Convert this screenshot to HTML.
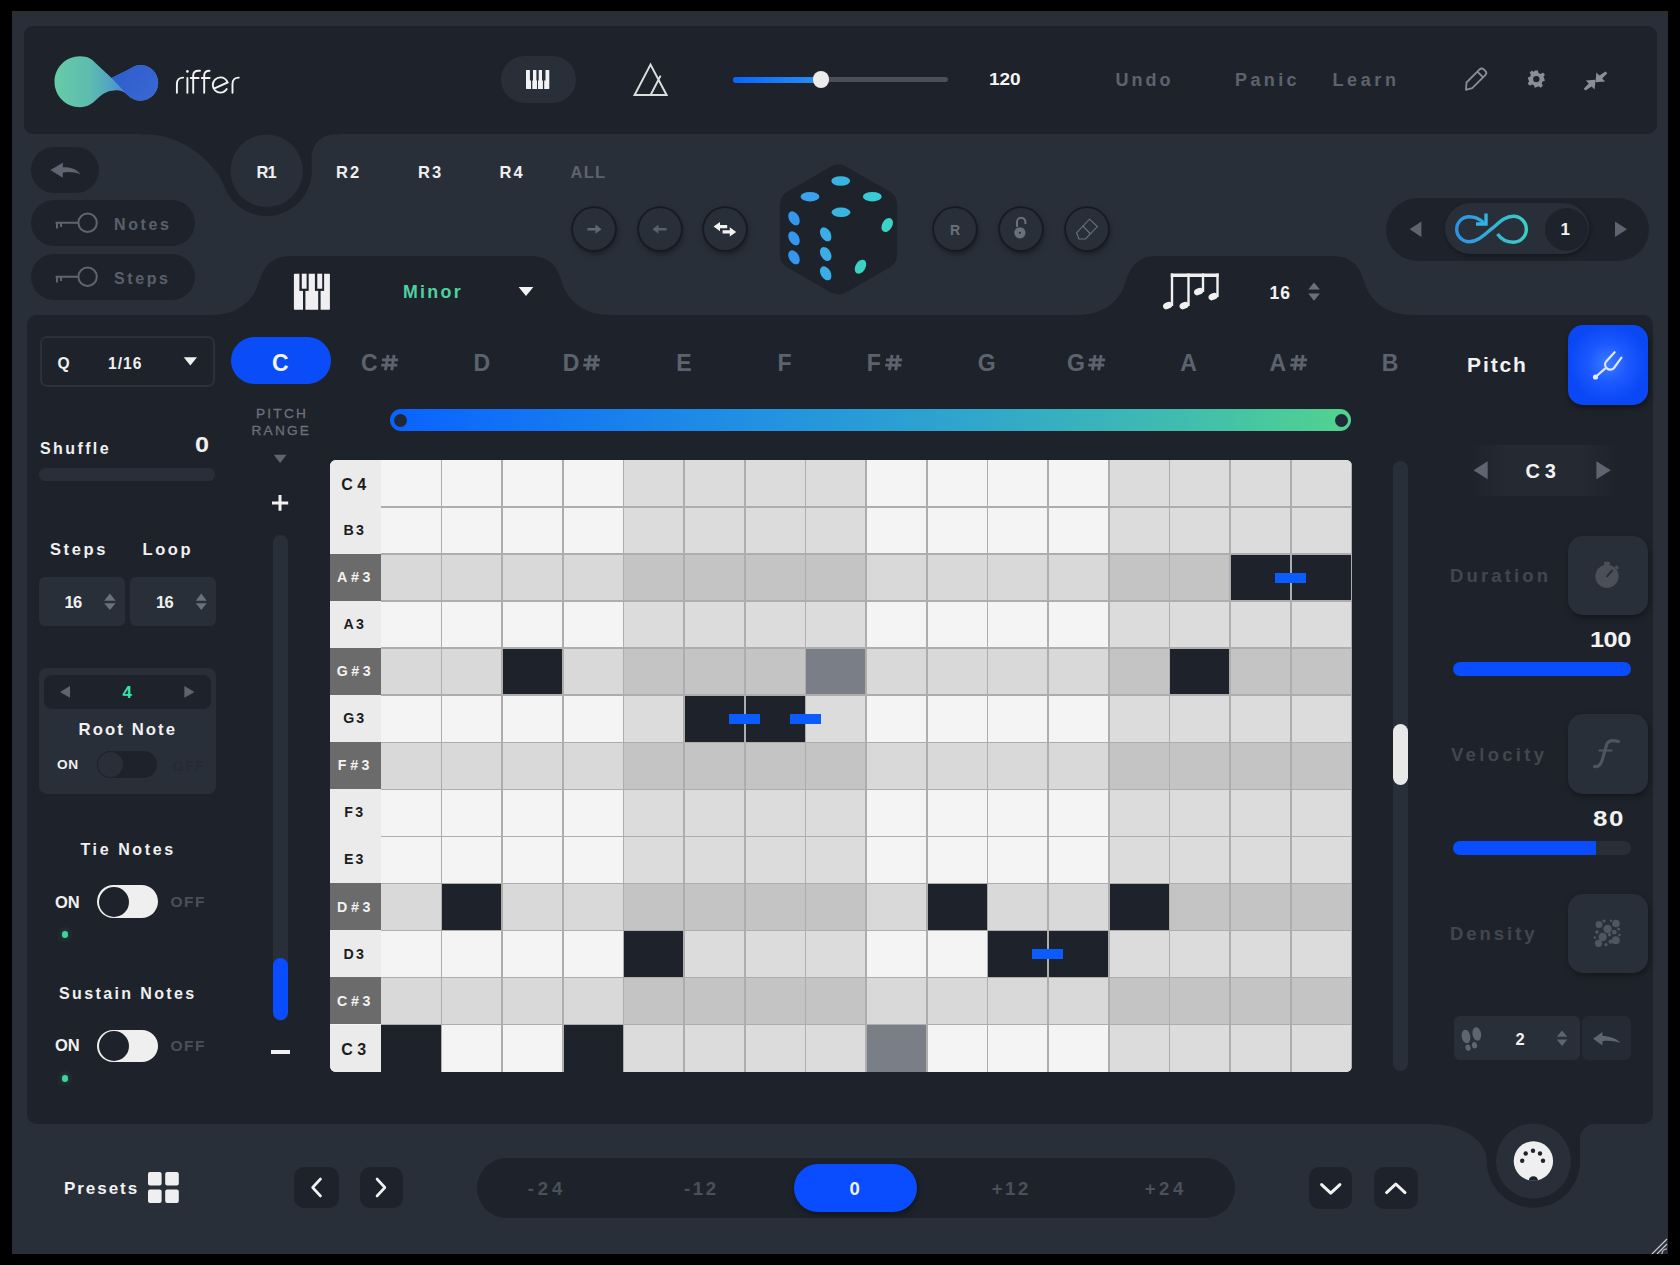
<!DOCTYPE html>
<html><head><meta charset="utf-8">
<style>
html,body{margin:0;padding:0;background:#000;width:1680px;height:1265px;overflow:hidden;font-family:"Liberation Sans",sans-serif;}
.a{position:absolute;}
.t{position:absolute;white-space:nowrap;font-weight:bold;line-height:1;}
.dk{background:#1e232b;}
.lt{background:#282f39;}
.cb{position:absolute;width:42px;height:42px;border-radius:50%;background:#282f39;box-shadow:0 0 0 1.8px #171a20,1px 3px 6px rgba(0,0,0,0.5);}
</style></head><body>
<svg class="a" style="left:0;top:0" width="1680" height="1265">
<rect x="12" y="11" width="1656" height="1243" fill="#282f39"/>
<rect x="12" y="11" width="1656" height="3" fill="#2c2d31"/>
<!-- header -->
<rect x="24" y="26" width="1633" height="108" rx="9" fill="#1e232b"/>
<path d="M140,130 V134.6 H148 C186,134.6 217.5,167.4 224.3,186.2 A45,45 0 0 0 311.6,170.8 V156.6 A22,22 0 0 1 333.6,134.6 H340 V120 H140 Z" fill="#1e232b"/>
<circle cx="266.6" cy="170.8" r="45" fill="#1e232b"/>
<circle cx="266.6" cy="170.8" r="36.2" fill="#282f39"/>
<!-- main panel -->
<rect x="27" y="315" width="1626" height="809" rx="10" fill="#1e232b"/>
<path d="M200,330 V315 H210 C238,315 253,300 258,285 C264,266 270,256 293,256 H528 C551,256 557,266 563,285 C568,300 583,315 611,315 V330 Z" fill="#1e232b"/>
<path d="M1066,330 V315 H1076.5 C1104.5,315 1119.5,300 1124.5,285 C1130.5,266 1136.5,256 1159.5,256 H1330.4 C1353.4,256 1359.4,266 1365.4,285 C1370.4,300 1385.4,315 1413.4,315 V330 Z" fill="#1e232b"/>
<!-- midi ring -->
<path d="M1420,1120 V1124 H1431 A56,37 0 0 1 1486.9,1161 A46.5,46.5 0 0 0 1579.9,1161 V1139 A15,15 0 0 1 1594.9,1124 H1610 V1110 H1420 Z" fill="#1e232b"/>
<circle cx="1533.4" cy="1161" r="46.5" fill="#1e232b"/>
<circle cx="1533.4" cy="1161" r="37.5" fill="#282f39"/>
</svg>
<!--HEADER-->
<svg class="a" style="left:0;top:0" width="260" height="130">
<defs>
<linearGradient id="lg" x1="54" y1="0" x2="126" y2="0" gradientUnits="userSpaceOnUse">
<stop offset="0" stop-color="#66cca6"/><stop offset="0.5" stop-color="#5dbcaf"/><stop offset="0.78" stop-color="#52a3c4"/><stop offset="1" stop-color="#4a86d4"/></linearGradient>
<linearGradient id="lg2" x1="112" y1="65" x2="158" y2="100" gradientUnits="userSpaceOnUse">
<stop offset="0" stop-color="#2d5cce"/><stop offset="1" stop-color="#3a68d2"/></linearGradient>
</defs>
<path d="M80,56.2 C88,56.2 92,59 96,63.5 L111.6,78.1 L130,68.8 C133.5,66.3 137,65 140.4,65 C150.2,65 158.2,73 158.2,82.8 C158.2,92.6 150.2,100.7 140.4,100.7 C135,100.7 131,98.5 127,94.5 C122,90 118,90.2 114.4,90.4 C108,90.6 103,93 97,99 C92,104 87,107.2 80,107.2 C65.9,107.2 54.5,95.8 54.5,81.7 C54.5,67.6 65.9,56.2 80,56.2 Z" fill="url(#lg)"/>
<path d="M111.6,78.1 L130,68.8 C133.5,66.3 137,65 140.4,65 C150.2,65 158.2,73 158.2,82.8 C158.2,92.6 150.2,100.7 140.4,100.7 C135,100.7 131,98.5 127,94.5 L125.6,93 Z" fill="url(#lg2)"/>
<g fill="none" stroke="#f4f4f4" stroke-width="1.9" stroke-linecap="round">
<path d="M176.9,92.8 V84 C176.9,80 179.5,77.6 183.2,77.6"/>
<path d="M187.4,78 V92.8"/>
<path d="M193.2,92.8 V75.5 C193.2,72.5 195.4,70.8 198.6,70.8 H200"/>
<path d="M190.8,78 H198.6"/>
<path d="M204.2,92.8 V75.5 C204.2,72.5 206.4,70.8 209.6,70.8"/>
<path d="M201.8,78 H209.6"/>
<path d="M214,88.6 L227.6,82.4 C226.3,79.3 223.4,77.4 220.4,77.4 C216.2,77.4 212.8,80.8 212.8,85 C212.8,89.2 216.2,92.6 220.4,92.6 C223.2,92.6 225.4,91.2 226.7,89"/>
<path d="M232.5,92.8 V84 C232.5,80 235.1,77.6 238.8,77.6"/>
</g>
<circle cx="187.4" cy="71.4" r="1.3" fill="#f4f4f4"/>
</svg>
<div class="a lt" style="left:501px;top:56px;width:75px;height:47px;border-radius:24px;"></div>
<svg class="a" style="left:526px;top:70px" width="24" height="19" viewBox="0 0 24 19"><g fill="#f2f2f4">
<path d="M0,0.6 Q0,0 0.6,0 H3.9 V10.6 H5 V18.9 H0.6 Q0,18.9 0,18.3 Z"/>
<path d="M7,0 H10.4 V10.6 H11 V18.9 H6.3 V10.6 H7 Z"/>
<path d="M12.7,0 H16 V10.6 H16.9 V18.9 H12 V10.6 H12.7 Z"/>
<path d="M19.5,0 H22.7 Q23.3,0 23.3,0.6 V18.3 Q23.3,18.9 22.7,18.9 H18.2 V10.6 H19.5 Z"/>
</g></svg>
<svg class="a" style="left:630px;top:60px" width="42" height="40">
<path d="M20.5,4.6 L4.6,35 H36.6 Z M20.6,35 L30.6,15.6" fill="none" stroke="#dcdcdc" stroke-width="2" stroke-linejoin="miter"/>
</svg>
<div class="a" style="left:733px;top:77px;width:215px;height:5px;border-radius:3px;background:#4a4f58;"></div>
<div class="a" style="left:733px;top:76.5px;width:90px;height:6px;border-radius:3px;background:linear-gradient(90deg,#0a66ff,#2a8ff0);"></div>
<div class="a" style="left:812.6px;top:70.9px;width:16.8px;height:16.8px;border-radius:50%;background:#ebebeb;"></div>
<div class="t" style="left:988.6px;top:71px;font-size:17px;color:#f5f5f5;letter-spacing:-0.1px;transform:scaleX(1.12);transform-origin:0 0;">120</div>
<div class="t" style="left:1115.5px;top:71px;font-size:18px;color:#5d636e;letter-spacing:3px;">Undo</div>
<div class="t" style="left:1235px;top:71px;font-size:18px;color:#5d636e;letter-spacing:3.4px;">Panic</div>
<div class="t" style="left:1332.5px;top:71px;font-size:18px;color:#5d636e;letter-spacing:3.6px;">Learn</div>
<svg class="a" style="left:1460px;top:62px" width="160" height="34">
<g fill="none" stroke="#8a8f97" stroke-width="1.8" stroke-linejoin="round">
<path d="M6.5,20.5 L19.6,7.4 C20.8,6.2 22.6,6.2 23.8,7.4 L25.3,8.9 C26.5,10.1 26.5,11.9 25.3,13.1 L12.2,26.2 L6,27.8 Z M17.4,9.6 L23.1,15.3"/>
</g>
<g transform="translate(76.3,17.1)" fill="#8a8f97">
<path d="M-1.6,-8.6 H1.6 L2.2,-6.2 L4.5,-5.2 L6.6,-6.6 L8.6,-4.4 L7.2,-2.3 L8.1,0 L8.6,1.6 L6.2,2.4 L5.4,4.4 L6.6,6.6 L4.4,8.6 L2.3,7.2 L0,8.1 L-1.6,8.6 L-2.4,6.2 L-4.4,5.4 L-6.6,6.6 L-8.6,4.4 L-7.2,2.3 L-8.1,0 L-8.6,-1.6 L-6.2,-2.4 L-5.4,-4.4 L-6.6,-6.6 L-4.4,-8.6 L-2.3,-7.2 Z"/>
<circle r="3.2" fill="#1e232b"/>
</g>
<g fill="#8a8f97">
<path d="M145.5,9.5 L147.3,11.3 L142.2,16.4 L145.2,19.4 L135.5,20.3 L136.4,10.6 L139.4,13.6 Z"/>
<path d="M125.5,28.5 L123.7,26.7 L128.8,21.6 L125.8,18.6 L135.5,17.7 L134.6,27.4 L131.6,24.4 Z"/>
</g>
</svg>

<!--TOP-->
<div class="a dk" style="left:31px;top:147px;width:68px;height:46px;border-radius:23px;"></div>
<svg class="a" style="left:31px;top:147px" width="68" height="46">
<path d="M19.4,23 L31.8,15.8 V20.3 C40,20 46,22.5 49.4,27.5 C44,25 38,24.5 31.8,25.6 V30.8 Z" fill="#5f6570"/>
</svg>
<div class="a dk" style="left:31px;top:200px;width:164px;height:46px;border-radius:23px;"></div>
<div class="a dk" style="left:31px;top:253.5px;width:164px;height:46px;border-radius:23px;"></div>
<svg class="a" style="left:50px;top:205px" width="60" height="90">
<g fill="none" stroke="#5f6570" stroke-width="2">
<circle cx="37.6" cy="17.8" r="9.2"/><path d="M5.6,17.8 H28.4 M7,17.8 V23.6 M11,17.8 V22"/>
<circle cx="37.6" cy="71.8" r="9.2"/><path d="M5.6,71.8 H28.4 M7,71.8 V77.6 M11,71.8 V76"/>
</g></svg>
<div class="t" style="left:114px;top:217px;font-size:16px;color:#5a606b;letter-spacing:2.6px;">Notes</div>
<div class="t" style="left:114px;top:270.5px;font-size:16px;color:#5a606b;letter-spacing:2.6px;">Steps</div>
<div class="t" style="left:256.5px;top:163.5px;font-size:16.5px;color:#f0f0f0;letter-spacing:-0.8px;">R1</div>
<div class="t" style="left:336px;top:163.5px;font-size:16.5px;color:#f0f0f0;letter-spacing:2px;">R2</div>
<div class="t" style="left:418px;top:163.5px;font-size:16.5px;color:#f0f0f0;letter-spacing:2px;">R3</div>
<div class="t" style="left:499.5px;top:163.5px;font-size:16.5px;color:#f0f0f0;letter-spacing:2px;">R4</div>
<div class="t" style="left:570.5px;top:163.5px;font-size:16.5px;color:#5d636e;letter-spacing:1.3px;">ALL</div>
<div class="cb" style="left:573px;top:208px;"></div>
<div class="cb" style="left:639px;top:208px;"></div>
<div class="cb" style="left:704px;top:208px;"></div>
<div class="cb" style="left:934px;top:208px;"></div>
<div class="cb" style="left:1000px;top:208px;"></div>
<div class="cb" style="left:1066px;top:208px;"></div>
<svg class="a" style="left:560px;top:150px" width="560" height="160">
<g fill="#6b717a">
<path d="M27.5,78 H35.5 V74.6 L41.5,79.2 L35.5,83.8 V80.4 H27.5 Z" fill="#62686f"/>
<path d="M106.5,78 H98.5 V74.6 L92.5,79.2 L98.5,83.8 V80.4 H106.5 Z" fill="#5a6068"/>
<text x="395" y="85.3" font-family="Liberation Sans" font-weight="bold" font-size="14" text-anchor="middle">R</text>
<circle cx="459.9" cy="82.8" r="5.6"/>
<path d="M457,77 V72 A4.2,4.2 0 0 1 465.4,72 V74" fill="none" stroke="#6b717a" stroke-width="2"/>
</g>
<circle cx="459.9" cy="82.8" r="1.1" fill="#282f39"/>
<g fill="#f2f2f2">
<path d="M153.6,76.6 L160,72 V75 H167.2 V78.2 H160 V81.2 Z"/>
<path d="M176.2,81.9 L169.8,77.3 V80.3 H162.6 V83.5 H169.8 V86.5 Z"/>
</g>
<g fill="none" stroke="#6b717a" stroke-width="1.1">
<path d="M516.5,82.8 L529.5,69.2 L537.4,76.6 L525.5,89 L519,89 Z M522.5,75.5 L530,83.5"/>
</g>
<path d="M270.99,16.51 Q278.50,12.20 286.01,16.51 L329.57,41.54 Q337.07,45.85 337.07,54.51 L337.07,104.49 Q337.07,113.15 329.57,117.46 L286.01,142.49 Q278.50,146.80 270.99,142.49 L227.43,117.46 Q219.93,113.15 219.93,104.49 L219.93,54.51 Q219.93,45.85 227.43,41.54 Z" fill="#1e232b"/>
<g>
<ellipse cx="280.7" cy="31" rx="9.4" ry="4.8" fill="#38b4e2"/>
<ellipse cx="250" cy="46.7" rx="9.4" ry="4.8" fill="#3aa2ea"/>
<ellipse cx="312.3" cy="46.7" rx="9.4" ry="4.8" fill="#3acad6"/>
<ellipse cx="281" cy="62.3" rx="9.4" ry="4.8" fill="#38b6e0"/>
<g fill="#3596ee">
<ellipse cx="234" cy="68.3" rx="5" ry="7.6" transform="rotate(-30 234 68.3)"/>
<ellipse cx="234" cy="88.3" rx="5" ry="7.6" transform="rotate(-30 234 88.3)"/>
<ellipse cx="234" cy="107.3" rx="5" ry="7.6" transform="rotate(-30 234 107.3)"/>
</g>
<g fill="#38ade6">
<ellipse cx="265.7" cy="84.3" rx="5" ry="7.6" transform="rotate(-30 265.7 84.3)"/>
<ellipse cx="265.7" cy="104" rx="5" ry="7.6" transform="rotate(-30 265.7 104)"/>
<ellipse cx="265.7" cy="123.3" rx="5" ry="7.6" transform="rotate(-30 265.7 123.3)"/>
</g>
<g fill="#3dd2c6">
<ellipse cx="327.2" cy="75" rx="5" ry="7.6" transform="rotate(30 327.2 75)"/>
<ellipse cx="300.5" cy="116.7" rx="5" ry="7.6" transform="rotate(30 300.5 116.7)"/>
</g>
</g>
</svg>
<div class="a dk" style="left:1386px;top:198px;width:263px;height:63px;border-radius:32px;"></div>
<div class="a lt" style="left:1445px;top:203px;width:144px;height:51px;border-radius:26px;box-shadow:1px 2px 4px rgba(0,0,0,0.35);"></div>
<div class="a dk" style="left:1544.5px;top:207.5px;width:43px;height:43px;border-radius:50%;"></div>
<div class="t" style="left:1560.5px;top:220.8px;font-size:17px;color:#f2f2f2;">1</div>
<svg class="a" style="left:1400px;top:200px" width="240" height="60">
<path d="M9.7,29.2 L21.4,21.4 V37 Z" fill="#5f6570"/>
<path d="M215,21.4 V37 L227,29.2 Z" fill="#5f6570"/>
<defs><linearGradient id="ig" x1="55" y1="0" x2="128" y2="0" gradientUnits="userSpaceOnUse"><stop offset="0" stop-color="#2d8fe6"/><stop offset="1" stop-color="#3ccfc8"/></linearGradient></defs>
<path d="M97.5,34 C101,39 106,42.2 113.3,42.2 C120.5,42.2 126.3,36.4 126.3,29.2 C126.3,22 120.5,16.2 113.3,16.2 C104,16.2 98,24 91.2,29.2 C84.5,34.5 78,41.7 69.2,41.7 C62.3,41.7 56.7,36.1 56.7,29.2 C56.7,22.3 62.3,16.7 69.2,16.7 C74,16.7 79,18.5 83.5,22.5" fill="none" stroke="url(#ig)" stroke-width="3.4" stroke-linecap="butt"/>
<path d="M86,13.6 V24 H76" fill="none" stroke="#37b0e4" stroke-width="3.4" stroke-linejoin="miter"/>
</svg>
<svg class="a" style="left:293px;top:273px" width="38" height="38">
<rect x="0.9" y="0.7" width="36" height="36" rx="0.8" fill="#f0f0f2"/>
<g fill="#1e232b"><rect x="10" y="15" width="2.4" height="22"/><rect x="25.2" y="15" width="2.4" height="22"/>
<rect x="6.4" y="0" width="9.3" height="17.9"/><rect x="21.9" y="0" width="9.2" height="17.9"/></g>
<g fill="#f0f0f2"><rect x="8.8" y="0.7" width="4.8" height="15"/><rect x="24.3" y="0.7" width="4.9" height="15"/></g>
</svg>
<div class="t" style="left:403px;top:284px;font-size:17.8px;color:#4fd0a0;letter-spacing:2.3px;">Minor</div>
<svg class="a" style="left:515px;top:283px" width="22" height="16"><path d="M3.6,4 H18.4 L11,13.1 Z" fill="#f2f2f2"/></svg>
<svg class="a" style="left:1160px;top:270px" width="62" height="44">
<g fill="#f0f0f0">
<rect x="10.8" y="3.5" width="47.9" height="3.5"/>
<rect x="10.8" y="3.5" width="2.4" height="32.5"/><rect x="27.3" y="3.5" width="2.4" height="32.5"/>
<rect x="41.8" y="3.5" width="2.4" height="18.5"/><rect x="56.3" y="3.5" width="2.4" height="23.5"/>
<ellipse cx="7.6" cy="35.6" rx="4.8" ry="3.3" transform="rotate(-24 7.6 35.6)"/>
<ellipse cx="24.1" cy="35.6" rx="4.8" ry="3.3" transform="rotate(-24 24.1 35.6)"/>
<ellipse cx="38.6" cy="21.6" rx="4.8" ry="3.3" transform="rotate(-24 38.6 21.6)"/>
<ellipse cx="53.1" cy="26.6" rx="4.8" ry="3.3" transform="rotate(-24 53.1 26.6)"/>
</g></svg>
<div class="t" style="left:1269.5px;top:284.5px;font-size:17.5px;color:#f2f2f2;letter-spacing:1px;">16</div>
<svg class="a" style="left:1305px;top:280px" width="18" height="24"><path d="M3.3,9.6 L9,2.5 L14.9,9.6 Z M3.3,13.6 H14.9 L9,20.7 Z" fill="#6b717a"/></svg>

<!--LEFT-->
<div class="a" style="left:39.5px;top:335.7px;width:171.8px;height:47.3px;border:2px solid #2b3039;border-radius:7px;"></div>
<div class="t" style="left:57.5px;top:356px;font-size:15.6px;color:#f0f0f0;">Q</div>
<div class="t" style="left:108px;top:356px;font-size:15.6px;color:#f0f0f0;letter-spacing:1px;">1/16</div>
<svg class="a" style="left:180px;top:354px" width="20" height="14"><path d="M3.7,3.2 H17 L10.35,11.4 Z" fill="#f0f0f0"/></svg>
<div class="t" style="left:40px;top:441px;font-size:16px;color:#f0f0f0;letter-spacing:2.4px;">Shuffle</div>
<div class="t" style="left:194.9px;top:433.5px;font-size:22.5px;color:#f0f0f0;transform:scaleX(1.12);transform-origin:0 0;">0</div>
<div class="a lt" style="left:39px;top:468px;width:176px;height:12.6px;border-radius:6.3px;"></div>
<div class="t" style="left:50px;top:541px;font-size:16.5px;color:#f0f0f0;letter-spacing:2.6px;">Steps</div>
<div class="t" style="left:142.5px;top:541px;font-size:16.5px;color:#f0f0f0;letter-spacing:2.6px;">Loop</div>
<div class="a lt" style="left:39px;top:577px;width:86px;height:49px;border-radius:6px;"></div>
<div class="a lt" style="left:130px;top:577px;width:85.6px;height:49px;border-radius:6px;"></div>
<div class="t" style="left:64.5px;top:593.8px;font-size:16.5px;color:#f0f0f0;letter-spacing:-0.6px;">16</div>
<div class="t" style="left:156px;top:593.8px;font-size:16.5px;color:#f0f0f0;letter-spacing:-0.6px;">16</div>
<svg class="a" style="left:100px;top:590px" width="112" height="24"><g fill="#6b717a"><path d="M4.2,10.7 L9.9,3.6 L15.6,10.7 Z M4.2,13.2 H15.6 L9.9,20 Z"/><path d="M95.8,10.7 L101.25,3.6 L106.7,10.7 Z M95.8,13.2 H106.7 L101.25,20 Z"/></g></svg>
<div class="a lt" style="left:39px;top:668px;width:176.6px;height:126px;border-radius:8px;"></div>
<div class="a dk" style="left:44px;top:674.6px;width:167px;height:34px;border-radius:8px;"></div>
<svg class="a" style="left:56px;top:682px" width="144" height="20"><g fill="#5f6570"><path d="M4,9.9 L14,4 V15.8 Z"/><path d="M128.4,4 V15.8 L138.5,9.9 Z"/></g></svg>
<div class="t" style="left:122.5px;top:683.5px;font-size:17px;color:#3de0a8;">4</div>
<div class="t" style="left:78.5px;top:722px;font-size:16.7px;color:#f0f0f0;letter-spacing:2.1px;">Root Note</div>
<div class="t" style="left:57px;top:757.8px;font-size:13.7px;color:#f0f0f0;letter-spacing:0.6px;">ON</div>
<div class="a dk" style="left:97px;top:750.6px;width:59.7px;height:27.4px;border-radius:14px;"></div>
<div class="a lt" style="left:98px;top:751.6px;width:25.4px;height:25.4px;border-radius:50%;box-shadow:0 0 0 1px #20242c;"></div>
<div class="t" style="left:172.5px;top:759px;font-size:14px;color:#262a32;letter-spacing:1.5px;">OFF</div>
<div class="t" style="left:80.5px;top:841.5px;font-size:16px;color:#f0f0f0;letter-spacing:2.6px;">Tie Notes</div>
<div class="t" style="left:55px;top:893.5px;font-size:16.5px;color:#f0f0f0;letter-spacing:0px;">ON</div>
<div class="a" style="left:97.2px;top:885.3px;width:60.8px;height:32.9px;border-radius:16.5px;background:#efefef;"></div>
<div class="a dk" style="left:98.5px;top:886.6px;width:30.3px;height:30.3px;border-radius:50%;"></div>
<div class="t" style="left:170.5px;top:893.8px;font-size:15.5px;color:#4a4f58;letter-spacing:1.5px;">OFF</div>
<div class="a" style="left:61.7px;top:931.1px;width:6.6px;height:6.6px;border-radius:50%;background:#40d49a;box-shadow:0 0 4px 2px rgba(40,140,100,0.25);"></div>
<div class="t" style="left:59px;top:986px;font-size:16px;color:#f0f0f0;letter-spacing:2.38px;">Sustain Notes</div>
<div class="t" style="left:55px;top:1037.3px;font-size:16.5px;color:#f0f0f0;letter-spacing:0px;">ON</div>
<div class="a" style="left:97.2px;top:1029.5px;width:60.8px;height:32.9px;border-radius:16.5px;background:#efefef;"></div>
<div class="a dk" style="left:98.5px;top:1030.8px;width:30.3px;height:30.3px;border-radius:50%;"></div>
<div class="t" style="left:170.5px;top:1037.5px;font-size:15.5px;color:#4a4f58;letter-spacing:1.5px;">OFF</div>
<div class="a" style="left:61.7px;top:1075.2px;width:6.6px;height:6.6px;border-radius:50%;background:#40d49a;box-shadow:0 0 4px 2px rgba(40,140,100,0.25);"></div>
<div class="t" style="left:256px;top:406.5px;font-size:13.7px;color:#6b717a;letter-spacing:2.2px;font-weight:normal;-webkit-text-stroke:0.3px #6b717a;">PITCH</div>
<div class="t" style="left:251.5px;top:423.5px;font-size:13.7px;color:#6b717a;letter-spacing:2.2px;font-weight:normal;-webkit-text-stroke:0.3px #6b717a;">RANGE</div>
<svg class="a" style="left:270px;top:450px" width="20" height="16"><path d="M3.7,4.8 H16.6 L10.15,13 Z" fill="#5f6570"/></svg>
<svg class="a" style="left:268px;top:491px" width="24" height="24"><path d="M12,4 V19.8 M4,11.9 H20.2" stroke="#f2f2f2" stroke-width="3"/></svg>
<div class="a lt" style="left:273px;top:535px;width:15px;height:486px;border-radius:7.5px;"></div>
<div class="a" style="left:273px;top:958px;width:15px;height:62px;border-radius:7.5px;background:#0a4cff;"></div>
<div class="a" style="left:270.6px;top:1050px;width:19px;height:3.5px;background:#f2f2f2;"></div>
<div class="a" style="left:231px;top:337px;width:100px;height:47px;border-radius:23.5px;background:#0a4cf8;"></div>
<!--NOTELABELS-->
<div class="t" style="left:271.9px;top:351.6px;font-size:23px;color:#f4f4f4;">C</div>
<div class="t" style="left:361.1px;top:351.6px;font-size:23px;color:#5d636e;">C</div>
<svg class="a" style="left:381.4px;top:353.8px" width="19" height="18"><path d="M7.1,1 L4.45,16.2 M13.1,1 L10.7,16.2 M1,5.8 H17.1 M0.2,11.1 H16.2" stroke="#5d636e" stroke-width="2.8" fill="none"/></svg>
<div class="t" style="left:473.4px;top:351.6px;font-size:23px;color:#5d636e;">D</div>
<div class="t" style="left:562.7px;top:351.6px;font-size:23px;color:#5d636e;">D</div>
<svg class="a" style="left:583.0px;top:353.8px" width="19" height="18"><path d="M7.1,1 L4.45,16.2 M13.1,1 L10.7,16.2 M1,5.8 H17.1 M0.2,11.1 H16.2" stroke="#5d636e" stroke-width="2.8" fill="none"/></svg>
<div class="t" style="left:676.2px;top:351.6px;font-size:23px;color:#5d636e;">E</div>
<div class="t" style="left:777.4px;top:351.6px;font-size:23px;color:#5d636e;">F</div>
<div class="t" style="left:866.7px;top:351.6px;font-size:23px;color:#5d636e;">F</div>
<svg class="a" style="left:884.5px;top:353.8px" width="19" height="18"><path d="M7.1,1 L4.45,16.2 M13.1,1 L10.7,16.2 M1,5.8 H17.1 M0.2,11.1 H16.2" stroke="#5d636e" stroke-width="2.8" fill="none"/></svg>
<div class="t" style="left:977.8px;top:351.6px;font-size:23px;color:#5d636e;">G</div>
<div class="t" style="left:1067.0px;top:351.6px;font-size:23px;color:#5d636e;">G</div>
<svg class="a" style="left:1088.2px;top:353.8px" width="19" height="18"><path d="M7.1,1 L4.45,16.2 M13.1,1 L10.7,16.2 M1,5.8 H17.1 M0.2,11.1 H16.2" stroke="#5d636e" stroke-width="2.8" fill="none"/></svg>
<div class="t" style="left:1180.3px;top:351.6px;font-size:23px;color:#5d636e;">A</div>
<div class="t" style="left:1269.6px;top:351.6px;font-size:23px;color:#5d636e;">A</div>
<svg class="a" style="left:1290.3px;top:353.8px" width="19" height="18"><path d="M7.1,1 L4.45,16.2 M13.1,1 L10.7,16.2 M1,5.8 H17.1 M0.2,11.1 H16.2" stroke="#5d636e" stroke-width="2.8" fill="none"/></svg>
<div class="t" style="left:1381.8px;top:351.6px;font-size:23px;color:#5d636e;">B</div>
<!--/NOTELABELS-->
<div class="a" style="left:390px;top:409px;width:961px;height:22px;border-radius:11px;background:linear-gradient(90deg,#0a62ff 0%,#1f8ee4 35%,#2fa6cc 60%,#40bcb0 82%,#52d38e 100%);"></div>
<div class="a" style="left:394px;top:413.5px;width:13px;height:13px;border-radius:50%;background:#1f2a36;"></div>
<div class="a" style="left:1334.5px;top:413.5px;width:13px;height:13px;border-radius:50%;background:#1f2a36;"></div>

<!--GRIDSTART-->
<!--GRID-->
<div class="a" style="left:330px;top:460px;width:1021.5px;height:611.5px;border-radius:6px;overflow:hidden;background:#f4f4f4;">
<div class="a" style="left:0;top:0.0px;width:50.75px;height:47.04px;background:#ebebeb;"></div>
<div class="t" style="left:0;top:19.2px;width:47.4px;text-align:center;font-size:16px;color:#1c1c1c;letter-spacing:4.6px;text-indent:4.6px;line-height:11.5px;">C4</div>
<div class="a" style="left:50.8px;top:0.0px;width:60.7px;height:47.04px;background:#f4f4f4;"></div>
<div class="a" style="left:111.4px;top:0.0px;width:60.7px;height:47.04px;background:#f4f4f4;"></div>
<div class="a" style="left:172.1px;top:0.0px;width:60.7px;height:47.04px;background:#f4f4f4;"></div>
<div class="a" style="left:232.8px;top:0.0px;width:60.7px;height:47.04px;background:#f4f4f4;"></div>
<div class="a" style="left:293.4px;top:0.0px;width:60.7px;height:47.04px;background:#dcdcdc;"></div>
<div class="a" style="left:354.1px;top:0.0px;width:60.7px;height:47.04px;background:#dcdcdc;"></div>
<div class="a" style="left:414.8px;top:0.0px;width:60.7px;height:47.04px;background:#dcdcdc;"></div>
<div class="a" style="left:475.4px;top:0.0px;width:60.7px;height:47.04px;background:#dcdcdc;"></div>
<div class="a" style="left:536.1px;top:0.0px;width:60.7px;height:47.04px;background:#f4f4f4;"></div>
<div class="a" style="left:596.8px;top:0.0px;width:60.7px;height:47.04px;background:#f4f4f4;"></div>
<div class="a" style="left:657.5px;top:0.0px;width:60.7px;height:47.04px;background:#f4f4f4;"></div>
<div class="a" style="left:718.1px;top:0.0px;width:60.7px;height:47.04px;background:#f4f4f4;"></div>
<div class="a" style="left:778.8px;top:0.0px;width:60.7px;height:47.04px;background:#dcdcdc;"></div>
<div class="a" style="left:839.5px;top:0.0px;width:60.7px;height:47.04px;background:#dcdcdc;"></div>
<div class="a" style="left:900.1px;top:0.0px;width:60.7px;height:47.04px;background:#dcdcdc;"></div>
<div class="a" style="left:960.8px;top:0.0px;width:60.7px;height:47.04px;background:#dcdcdc;"></div>
<div class="a" style="left:0;top:47.0px;width:50.75px;height:47.04px;background:#ebebeb;"></div>
<div class="t" style="left:0;top:65.1px;width:47.4px;text-align:center;font-size:14.2px;color:#1c1c1c;letter-spacing:2.2px;text-indent:2.2px;line-height:10.2px;">B3</div>
<div class="a" style="left:50.8px;top:47.0px;width:60.7px;height:47.04px;background:#f4f4f4;"></div>
<div class="a" style="left:111.4px;top:47.0px;width:60.7px;height:47.04px;background:#f4f4f4;"></div>
<div class="a" style="left:172.1px;top:47.0px;width:60.7px;height:47.04px;background:#f4f4f4;"></div>
<div class="a" style="left:232.8px;top:47.0px;width:60.7px;height:47.04px;background:#f4f4f4;"></div>
<div class="a" style="left:293.4px;top:47.0px;width:60.7px;height:47.04px;background:#dcdcdc;"></div>
<div class="a" style="left:354.1px;top:47.0px;width:60.7px;height:47.04px;background:#dcdcdc;"></div>
<div class="a" style="left:414.8px;top:47.0px;width:60.7px;height:47.04px;background:#dcdcdc;"></div>
<div class="a" style="left:475.4px;top:47.0px;width:60.7px;height:47.04px;background:#dcdcdc;"></div>
<div class="a" style="left:536.1px;top:47.0px;width:60.7px;height:47.04px;background:#f4f4f4;"></div>
<div class="a" style="left:596.8px;top:47.0px;width:60.7px;height:47.04px;background:#f4f4f4;"></div>
<div class="a" style="left:657.5px;top:47.0px;width:60.7px;height:47.04px;background:#f4f4f4;"></div>
<div class="a" style="left:718.1px;top:47.0px;width:60.7px;height:47.04px;background:#f4f4f4;"></div>
<div class="a" style="left:778.8px;top:47.0px;width:60.7px;height:47.04px;background:#dcdcdc;"></div>
<div class="a" style="left:839.5px;top:47.0px;width:60.7px;height:47.04px;background:#dcdcdc;"></div>
<div class="a" style="left:900.1px;top:47.0px;width:60.7px;height:47.04px;background:#dcdcdc;"></div>
<div class="a" style="left:960.8px;top:47.0px;width:60.7px;height:47.04px;background:#dcdcdc;"></div>
<div class="a" style="left:0;top:94.1px;width:50.75px;height:47.04px;background:#6b6b6b;"></div>
<div class="t" style="left:0;top:112.2px;width:47.4px;text-align:center;font-size:14.2px;color:#f2f2f2;letter-spacing:3.6px;text-indent:3.6px;line-height:10.2px;">A#3</div>
<div class="a" style="left:50.8px;top:94.1px;width:60.7px;height:47.04px;background:#d9d9d9;"></div>
<div class="a" style="left:111.4px;top:94.1px;width:60.7px;height:47.04px;background:#d9d9d9;"></div>
<div class="a" style="left:172.1px;top:94.1px;width:60.7px;height:47.04px;background:#d9d9d9;"></div>
<div class="a" style="left:232.8px;top:94.1px;width:60.7px;height:47.04px;background:#d9d9d9;"></div>
<div class="a" style="left:293.4px;top:94.1px;width:60.7px;height:47.04px;background:#c4c4c4;"></div>
<div class="a" style="left:354.1px;top:94.1px;width:60.7px;height:47.04px;background:#c4c4c4;"></div>
<div class="a" style="left:414.8px;top:94.1px;width:60.7px;height:47.04px;background:#c4c4c4;"></div>
<div class="a" style="left:475.4px;top:94.1px;width:60.7px;height:47.04px;background:#c4c4c4;"></div>
<div class="a" style="left:536.1px;top:94.1px;width:60.7px;height:47.04px;background:#d9d9d9;"></div>
<div class="a" style="left:596.8px;top:94.1px;width:60.7px;height:47.04px;background:#d9d9d9;"></div>
<div class="a" style="left:657.5px;top:94.1px;width:60.7px;height:47.04px;background:#d9d9d9;"></div>
<div class="a" style="left:718.1px;top:94.1px;width:60.7px;height:47.04px;background:#d9d9d9;"></div>
<div class="a" style="left:778.8px;top:94.1px;width:60.7px;height:47.04px;background:#c4c4c4;"></div>
<div class="a" style="left:839.5px;top:94.1px;width:60.7px;height:47.04px;background:#c4c4c4;"></div>
<div class="a" style="left:900.1px;top:94.1px;width:60.7px;height:47.04px;background:#1e232b;"></div>
<div class="a" style="left:960.8px;top:94.1px;width:60.7px;height:47.04px;background:#1e232b;"></div>
<div class="a" style="left:0;top:141.1px;width:50.75px;height:47.04px;background:#ebebeb;"></div>
<div class="t" style="left:0;top:159.2px;width:47.4px;text-align:center;font-size:14.2px;color:#1c1c1c;letter-spacing:2.2px;text-indent:2.2px;line-height:10.2px;">A3</div>
<div class="a" style="left:50.8px;top:141.1px;width:60.7px;height:47.04px;background:#f4f4f4;"></div>
<div class="a" style="left:111.4px;top:141.1px;width:60.7px;height:47.04px;background:#f4f4f4;"></div>
<div class="a" style="left:172.1px;top:141.1px;width:60.7px;height:47.04px;background:#f4f4f4;"></div>
<div class="a" style="left:232.8px;top:141.1px;width:60.7px;height:47.04px;background:#f4f4f4;"></div>
<div class="a" style="left:293.4px;top:141.1px;width:60.7px;height:47.04px;background:#dcdcdc;"></div>
<div class="a" style="left:354.1px;top:141.1px;width:60.7px;height:47.04px;background:#dcdcdc;"></div>
<div class="a" style="left:414.8px;top:141.1px;width:60.7px;height:47.04px;background:#dcdcdc;"></div>
<div class="a" style="left:475.4px;top:141.1px;width:60.7px;height:47.04px;background:#dcdcdc;"></div>
<div class="a" style="left:536.1px;top:141.1px;width:60.7px;height:47.04px;background:#f4f4f4;"></div>
<div class="a" style="left:596.8px;top:141.1px;width:60.7px;height:47.04px;background:#f4f4f4;"></div>
<div class="a" style="left:657.5px;top:141.1px;width:60.7px;height:47.04px;background:#f4f4f4;"></div>
<div class="a" style="left:718.1px;top:141.1px;width:60.7px;height:47.04px;background:#f4f4f4;"></div>
<div class="a" style="left:778.8px;top:141.1px;width:60.7px;height:47.04px;background:#dcdcdc;"></div>
<div class="a" style="left:839.5px;top:141.1px;width:60.7px;height:47.04px;background:#dcdcdc;"></div>
<div class="a" style="left:900.1px;top:141.1px;width:60.7px;height:47.04px;background:#dcdcdc;"></div>
<div class="a" style="left:960.8px;top:141.1px;width:60.7px;height:47.04px;background:#dcdcdc;"></div>
<div class="a" style="left:0;top:188.2px;width:50.75px;height:47.04px;background:#6b6b6b;"></div>
<div class="t" style="left:0;top:206.3px;width:47.4px;text-align:center;font-size:14.2px;color:#f2f2f2;letter-spacing:3.6px;text-indent:3.6px;line-height:10.2px;">G#3</div>
<div class="a" style="left:50.8px;top:188.2px;width:60.7px;height:47.04px;background:#d9d9d9;"></div>
<div class="a" style="left:111.4px;top:188.2px;width:60.7px;height:47.04px;background:#d9d9d9;"></div>
<div class="a" style="left:172.1px;top:188.2px;width:60.7px;height:47.04px;background:#1e232b;"></div>
<div class="a" style="left:232.8px;top:188.2px;width:60.7px;height:47.04px;background:#d9d9d9;"></div>
<div class="a" style="left:293.4px;top:188.2px;width:60.7px;height:47.04px;background:#c4c4c4;"></div>
<div class="a" style="left:354.1px;top:188.2px;width:60.7px;height:47.04px;background:#c4c4c4;"></div>
<div class="a" style="left:414.8px;top:188.2px;width:60.7px;height:47.04px;background:#c4c4c4;"></div>
<div class="a" style="left:475.4px;top:188.2px;width:60.7px;height:47.04px;background:#7a7f87;"></div>
<div class="a" style="left:536.1px;top:188.2px;width:60.7px;height:47.04px;background:#d9d9d9;"></div>
<div class="a" style="left:596.8px;top:188.2px;width:60.7px;height:47.04px;background:#d9d9d9;"></div>
<div class="a" style="left:657.5px;top:188.2px;width:60.7px;height:47.04px;background:#d9d9d9;"></div>
<div class="a" style="left:718.1px;top:188.2px;width:60.7px;height:47.04px;background:#d9d9d9;"></div>
<div class="a" style="left:778.8px;top:188.2px;width:60.7px;height:47.04px;background:#c4c4c4;"></div>
<div class="a" style="left:839.5px;top:188.2px;width:60.7px;height:47.04px;background:#1e232b;"></div>
<div class="a" style="left:900.1px;top:188.2px;width:60.7px;height:47.04px;background:#c4c4c4;"></div>
<div class="a" style="left:960.8px;top:188.2px;width:60.7px;height:47.04px;background:#c4c4c4;"></div>
<div class="a" style="left:0;top:235.2px;width:50.75px;height:47.04px;background:#ebebeb;"></div>
<div class="t" style="left:0;top:253.3px;width:47.4px;text-align:center;font-size:14.2px;color:#1c1c1c;letter-spacing:2.2px;text-indent:2.2px;line-height:10.2px;">G3</div>
<div class="a" style="left:50.8px;top:235.2px;width:60.7px;height:47.04px;background:#f4f4f4;"></div>
<div class="a" style="left:111.4px;top:235.2px;width:60.7px;height:47.04px;background:#f4f4f4;"></div>
<div class="a" style="left:172.1px;top:235.2px;width:60.7px;height:47.04px;background:#f4f4f4;"></div>
<div class="a" style="left:232.8px;top:235.2px;width:60.7px;height:47.04px;background:#f4f4f4;"></div>
<div class="a" style="left:293.4px;top:235.2px;width:60.7px;height:47.04px;background:#dcdcdc;"></div>
<div class="a" style="left:354.1px;top:235.2px;width:60.7px;height:47.04px;background:#1e232b;"></div>
<div class="a" style="left:414.8px;top:235.2px;width:60.7px;height:47.04px;background:#1e232b;"></div>
<div class="a" style="left:475.4px;top:235.2px;width:60.7px;height:47.04px;background:#dcdcdc;"></div>
<div class="a" style="left:536.1px;top:235.2px;width:60.7px;height:47.04px;background:#f4f4f4;"></div>
<div class="a" style="left:596.8px;top:235.2px;width:60.7px;height:47.04px;background:#f4f4f4;"></div>
<div class="a" style="left:657.5px;top:235.2px;width:60.7px;height:47.04px;background:#f4f4f4;"></div>
<div class="a" style="left:718.1px;top:235.2px;width:60.7px;height:47.04px;background:#f4f4f4;"></div>
<div class="a" style="left:778.8px;top:235.2px;width:60.7px;height:47.04px;background:#dcdcdc;"></div>
<div class="a" style="left:839.5px;top:235.2px;width:60.7px;height:47.04px;background:#dcdcdc;"></div>
<div class="a" style="left:900.1px;top:235.2px;width:60.7px;height:47.04px;background:#dcdcdc;"></div>
<div class="a" style="left:960.8px;top:235.2px;width:60.7px;height:47.04px;background:#dcdcdc;"></div>
<div class="a" style="left:0;top:282.2px;width:50.75px;height:47.04px;background:#6b6b6b;"></div>
<div class="t" style="left:0;top:300.3px;width:47.4px;text-align:center;font-size:14.2px;color:#f2f2f2;letter-spacing:3.6px;text-indent:3.6px;line-height:10.2px;">F#3</div>
<div class="a" style="left:50.8px;top:282.2px;width:60.7px;height:47.04px;background:#d9d9d9;"></div>
<div class="a" style="left:111.4px;top:282.2px;width:60.7px;height:47.04px;background:#d9d9d9;"></div>
<div class="a" style="left:172.1px;top:282.2px;width:60.7px;height:47.04px;background:#d9d9d9;"></div>
<div class="a" style="left:232.8px;top:282.2px;width:60.7px;height:47.04px;background:#d9d9d9;"></div>
<div class="a" style="left:293.4px;top:282.2px;width:60.7px;height:47.04px;background:#c4c4c4;"></div>
<div class="a" style="left:354.1px;top:282.2px;width:60.7px;height:47.04px;background:#c4c4c4;"></div>
<div class="a" style="left:414.8px;top:282.2px;width:60.7px;height:47.04px;background:#c4c4c4;"></div>
<div class="a" style="left:475.4px;top:282.2px;width:60.7px;height:47.04px;background:#c4c4c4;"></div>
<div class="a" style="left:536.1px;top:282.2px;width:60.7px;height:47.04px;background:#d9d9d9;"></div>
<div class="a" style="left:596.8px;top:282.2px;width:60.7px;height:47.04px;background:#d9d9d9;"></div>
<div class="a" style="left:657.5px;top:282.2px;width:60.7px;height:47.04px;background:#d9d9d9;"></div>
<div class="a" style="left:718.1px;top:282.2px;width:60.7px;height:47.04px;background:#d9d9d9;"></div>
<div class="a" style="left:778.8px;top:282.2px;width:60.7px;height:47.04px;background:#c4c4c4;"></div>
<div class="a" style="left:839.5px;top:282.2px;width:60.7px;height:47.04px;background:#c4c4c4;"></div>
<div class="a" style="left:900.1px;top:282.2px;width:60.7px;height:47.04px;background:#c4c4c4;"></div>
<div class="a" style="left:960.8px;top:282.2px;width:60.7px;height:47.04px;background:#c4c4c4;"></div>
<div class="a" style="left:0;top:329.3px;width:50.75px;height:47.04px;background:#ebebeb;"></div>
<div class="t" style="left:0;top:347.4px;width:47.4px;text-align:center;font-size:14.2px;color:#1c1c1c;letter-spacing:2.2px;text-indent:2.2px;line-height:10.2px;">F3</div>
<div class="a" style="left:50.8px;top:329.3px;width:60.7px;height:47.04px;background:#f4f4f4;"></div>
<div class="a" style="left:111.4px;top:329.3px;width:60.7px;height:47.04px;background:#f4f4f4;"></div>
<div class="a" style="left:172.1px;top:329.3px;width:60.7px;height:47.04px;background:#f4f4f4;"></div>
<div class="a" style="left:232.8px;top:329.3px;width:60.7px;height:47.04px;background:#f4f4f4;"></div>
<div class="a" style="left:293.4px;top:329.3px;width:60.7px;height:47.04px;background:#dcdcdc;"></div>
<div class="a" style="left:354.1px;top:329.3px;width:60.7px;height:47.04px;background:#dcdcdc;"></div>
<div class="a" style="left:414.8px;top:329.3px;width:60.7px;height:47.04px;background:#dcdcdc;"></div>
<div class="a" style="left:475.4px;top:329.3px;width:60.7px;height:47.04px;background:#dcdcdc;"></div>
<div class="a" style="left:536.1px;top:329.3px;width:60.7px;height:47.04px;background:#f4f4f4;"></div>
<div class="a" style="left:596.8px;top:329.3px;width:60.7px;height:47.04px;background:#f4f4f4;"></div>
<div class="a" style="left:657.5px;top:329.3px;width:60.7px;height:47.04px;background:#f4f4f4;"></div>
<div class="a" style="left:718.1px;top:329.3px;width:60.7px;height:47.04px;background:#f4f4f4;"></div>
<div class="a" style="left:778.8px;top:329.3px;width:60.7px;height:47.04px;background:#dcdcdc;"></div>
<div class="a" style="left:839.5px;top:329.3px;width:60.7px;height:47.04px;background:#dcdcdc;"></div>
<div class="a" style="left:900.1px;top:329.3px;width:60.7px;height:47.04px;background:#dcdcdc;"></div>
<div class="a" style="left:960.8px;top:329.3px;width:60.7px;height:47.04px;background:#dcdcdc;"></div>
<div class="a" style="left:0;top:376.3px;width:50.75px;height:47.04px;background:#ebebeb;"></div>
<div class="t" style="left:0;top:394.4px;width:47.4px;text-align:center;font-size:14.2px;color:#1c1c1c;letter-spacing:2.2px;text-indent:2.2px;line-height:10.2px;">E3</div>
<div class="a" style="left:50.8px;top:376.3px;width:60.7px;height:47.04px;background:#f4f4f4;"></div>
<div class="a" style="left:111.4px;top:376.3px;width:60.7px;height:47.04px;background:#f4f4f4;"></div>
<div class="a" style="left:172.1px;top:376.3px;width:60.7px;height:47.04px;background:#f4f4f4;"></div>
<div class="a" style="left:232.8px;top:376.3px;width:60.7px;height:47.04px;background:#f4f4f4;"></div>
<div class="a" style="left:293.4px;top:376.3px;width:60.7px;height:47.04px;background:#dcdcdc;"></div>
<div class="a" style="left:354.1px;top:376.3px;width:60.7px;height:47.04px;background:#dcdcdc;"></div>
<div class="a" style="left:414.8px;top:376.3px;width:60.7px;height:47.04px;background:#dcdcdc;"></div>
<div class="a" style="left:475.4px;top:376.3px;width:60.7px;height:47.04px;background:#dcdcdc;"></div>
<div class="a" style="left:536.1px;top:376.3px;width:60.7px;height:47.04px;background:#f4f4f4;"></div>
<div class="a" style="left:596.8px;top:376.3px;width:60.7px;height:47.04px;background:#f4f4f4;"></div>
<div class="a" style="left:657.5px;top:376.3px;width:60.7px;height:47.04px;background:#f4f4f4;"></div>
<div class="a" style="left:718.1px;top:376.3px;width:60.7px;height:47.04px;background:#f4f4f4;"></div>
<div class="a" style="left:778.8px;top:376.3px;width:60.7px;height:47.04px;background:#dcdcdc;"></div>
<div class="a" style="left:839.5px;top:376.3px;width:60.7px;height:47.04px;background:#dcdcdc;"></div>
<div class="a" style="left:900.1px;top:376.3px;width:60.7px;height:47.04px;background:#dcdcdc;"></div>
<div class="a" style="left:960.8px;top:376.3px;width:60.7px;height:47.04px;background:#dcdcdc;"></div>
<div class="a" style="left:0;top:423.4px;width:50.75px;height:47.04px;background:#6b6b6b;"></div>
<div class="t" style="left:0;top:441.5px;width:47.4px;text-align:center;font-size:14.2px;color:#f2f2f2;letter-spacing:3.6px;text-indent:3.6px;line-height:10.2px;">D#3</div>
<div class="a" style="left:50.8px;top:423.4px;width:60.7px;height:47.04px;background:#d9d9d9;"></div>
<div class="a" style="left:111.4px;top:423.4px;width:60.7px;height:47.04px;background:#1e232b;"></div>
<div class="a" style="left:172.1px;top:423.4px;width:60.7px;height:47.04px;background:#d9d9d9;"></div>
<div class="a" style="left:232.8px;top:423.4px;width:60.7px;height:47.04px;background:#d9d9d9;"></div>
<div class="a" style="left:293.4px;top:423.4px;width:60.7px;height:47.04px;background:#c4c4c4;"></div>
<div class="a" style="left:354.1px;top:423.4px;width:60.7px;height:47.04px;background:#c4c4c4;"></div>
<div class="a" style="left:414.8px;top:423.4px;width:60.7px;height:47.04px;background:#c4c4c4;"></div>
<div class="a" style="left:475.4px;top:423.4px;width:60.7px;height:47.04px;background:#c4c4c4;"></div>
<div class="a" style="left:536.1px;top:423.4px;width:60.7px;height:47.04px;background:#d9d9d9;"></div>
<div class="a" style="left:596.8px;top:423.4px;width:60.7px;height:47.04px;background:#1e232b;"></div>
<div class="a" style="left:657.5px;top:423.4px;width:60.7px;height:47.04px;background:#d9d9d9;"></div>
<div class="a" style="left:718.1px;top:423.4px;width:60.7px;height:47.04px;background:#d9d9d9;"></div>
<div class="a" style="left:778.8px;top:423.4px;width:60.7px;height:47.04px;background:#1e232b;"></div>
<div class="a" style="left:839.5px;top:423.4px;width:60.7px;height:47.04px;background:#c4c4c4;"></div>
<div class="a" style="left:900.1px;top:423.4px;width:60.7px;height:47.04px;background:#c4c4c4;"></div>
<div class="a" style="left:960.8px;top:423.4px;width:60.7px;height:47.04px;background:#c4c4c4;"></div>
<div class="a" style="left:0;top:470.4px;width:50.75px;height:47.04px;background:#ebebeb;"></div>
<div class="t" style="left:0;top:488.5px;width:47.4px;text-align:center;font-size:14.2px;color:#1c1c1c;letter-spacing:2.2px;text-indent:2.2px;line-height:10.2px;">D3</div>
<div class="a" style="left:50.8px;top:470.4px;width:60.7px;height:47.04px;background:#f4f4f4;"></div>
<div class="a" style="left:111.4px;top:470.4px;width:60.7px;height:47.04px;background:#f4f4f4;"></div>
<div class="a" style="left:172.1px;top:470.4px;width:60.7px;height:47.04px;background:#f4f4f4;"></div>
<div class="a" style="left:232.8px;top:470.4px;width:60.7px;height:47.04px;background:#f4f4f4;"></div>
<div class="a" style="left:293.4px;top:470.4px;width:60.7px;height:47.04px;background:#1e232b;"></div>
<div class="a" style="left:354.1px;top:470.4px;width:60.7px;height:47.04px;background:#dcdcdc;"></div>
<div class="a" style="left:414.8px;top:470.4px;width:60.7px;height:47.04px;background:#dcdcdc;"></div>
<div class="a" style="left:475.4px;top:470.4px;width:60.7px;height:47.04px;background:#dcdcdc;"></div>
<div class="a" style="left:536.1px;top:470.4px;width:60.7px;height:47.04px;background:#f4f4f4;"></div>
<div class="a" style="left:596.8px;top:470.4px;width:60.7px;height:47.04px;background:#f4f4f4;"></div>
<div class="a" style="left:657.5px;top:470.4px;width:60.7px;height:47.04px;background:#1e232b;"></div>
<div class="a" style="left:718.1px;top:470.4px;width:60.7px;height:47.04px;background:#1e232b;"></div>
<div class="a" style="left:778.8px;top:470.4px;width:60.7px;height:47.04px;background:#dcdcdc;"></div>
<div class="a" style="left:839.5px;top:470.4px;width:60.7px;height:47.04px;background:#dcdcdc;"></div>
<div class="a" style="left:900.1px;top:470.4px;width:60.7px;height:47.04px;background:#dcdcdc;"></div>
<div class="a" style="left:960.8px;top:470.4px;width:60.7px;height:47.04px;background:#dcdcdc;"></div>
<div class="a" style="left:0;top:517.4px;width:50.75px;height:47.04px;background:#6b6b6b;"></div>
<div class="t" style="left:0;top:535.5px;width:47.4px;text-align:center;font-size:14.2px;color:#f2f2f2;letter-spacing:3.6px;text-indent:3.6px;line-height:10.2px;">C#3</div>
<div class="a" style="left:50.8px;top:517.4px;width:60.7px;height:47.04px;background:#d9d9d9;"></div>
<div class="a" style="left:111.4px;top:517.4px;width:60.7px;height:47.04px;background:#d9d9d9;"></div>
<div class="a" style="left:172.1px;top:517.4px;width:60.7px;height:47.04px;background:#d9d9d9;"></div>
<div class="a" style="left:232.8px;top:517.4px;width:60.7px;height:47.04px;background:#d9d9d9;"></div>
<div class="a" style="left:293.4px;top:517.4px;width:60.7px;height:47.04px;background:#c4c4c4;"></div>
<div class="a" style="left:354.1px;top:517.4px;width:60.7px;height:47.04px;background:#c4c4c4;"></div>
<div class="a" style="left:414.8px;top:517.4px;width:60.7px;height:47.04px;background:#c4c4c4;"></div>
<div class="a" style="left:475.4px;top:517.4px;width:60.7px;height:47.04px;background:#c4c4c4;"></div>
<div class="a" style="left:536.1px;top:517.4px;width:60.7px;height:47.04px;background:#d9d9d9;"></div>
<div class="a" style="left:596.8px;top:517.4px;width:60.7px;height:47.04px;background:#d9d9d9;"></div>
<div class="a" style="left:657.5px;top:517.4px;width:60.7px;height:47.04px;background:#d9d9d9;"></div>
<div class="a" style="left:718.1px;top:517.4px;width:60.7px;height:47.04px;background:#d9d9d9;"></div>
<div class="a" style="left:778.8px;top:517.4px;width:60.7px;height:47.04px;background:#c4c4c4;"></div>
<div class="a" style="left:839.5px;top:517.4px;width:60.7px;height:47.04px;background:#c4c4c4;"></div>
<div class="a" style="left:900.1px;top:517.4px;width:60.7px;height:47.04px;background:#c4c4c4;"></div>
<div class="a" style="left:960.8px;top:517.4px;width:60.7px;height:47.04px;background:#c4c4c4;"></div>
<div class="a" style="left:0;top:564.5px;width:50.75px;height:47.04px;background:#ebebeb;"></div>
<div class="t" style="left:0;top:583.6px;width:47.4px;text-align:center;font-size:16px;color:#1c1c1c;letter-spacing:4.6px;text-indent:4.6px;line-height:11.5px;">C3</div>
<div class="a" style="left:50.8px;top:564.5px;width:60.7px;height:47.04px;background:#1e232b;"></div>
<div class="a" style="left:111.4px;top:564.5px;width:60.7px;height:47.04px;background:#f4f4f4;"></div>
<div class="a" style="left:172.1px;top:564.5px;width:60.7px;height:47.04px;background:#f4f4f4;"></div>
<div class="a" style="left:232.8px;top:564.5px;width:60.7px;height:47.04px;background:#1e232b;"></div>
<div class="a" style="left:293.4px;top:564.5px;width:60.7px;height:47.04px;background:#dcdcdc;"></div>
<div class="a" style="left:354.1px;top:564.5px;width:60.7px;height:47.04px;background:#dcdcdc;"></div>
<div class="a" style="left:414.8px;top:564.5px;width:60.7px;height:47.04px;background:#dcdcdc;"></div>
<div class="a" style="left:475.4px;top:564.5px;width:60.7px;height:47.04px;background:#dcdcdc;"></div>
<div class="a" style="left:536.1px;top:564.5px;width:60.7px;height:47.04px;background:#7a7f87;"></div>
<div class="a" style="left:596.8px;top:564.5px;width:60.7px;height:47.04px;background:#f4f4f4;"></div>
<div class="a" style="left:657.5px;top:564.5px;width:60.7px;height:47.04px;background:#f4f4f4;"></div>
<div class="a" style="left:718.1px;top:564.5px;width:60.7px;height:47.04px;background:#f4f4f4;"></div>
<div class="a" style="left:778.8px;top:564.5px;width:60.7px;height:47.04px;background:#dcdcdc;"></div>
<div class="a" style="left:839.5px;top:564.5px;width:60.7px;height:47.04px;background:#dcdcdc;"></div>
<div class="a" style="left:900.1px;top:564.5px;width:60.7px;height:47.04px;background:#dcdcdc;"></div>
<div class="a" style="left:960.8px;top:564.5px;width:60.7px;height:47.04px;background:#dcdcdc;"></div>
<div class="a" style="left:110.6px;top:0;width:1.6px;height:611.52px;background:#adadad;"></div>
<div class="a" style="left:171.3px;top:0;width:1.6px;height:611.52px;background:#adadad;"></div>
<div class="a" style="left:232.0px;top:0;width:1.6px;height:611.52px;background:#adadad;"></div>
<div class="a" style="left:292.6px;top:0;width:1.6px;height:611.52px;background:#adadad;"></div>
<div class="a" style="left:353.3px;top:0;width:1.6px;height:611.52px;background:#adadad;"></div>
<div class="a" style="left:414.0px;top:0;width:1.6px;height:611.52px;background:#adadad;"></div>
<div class="a" style="left:474.6px;top:0;width:1.6px;height:611.52px;background:#adadad;"></div>
<div class="a" style="left:535.3px;top:0;width:1.6px;height:611.52px;background:#adadad;"></div>
<div class="a" style="left:596.0px;top:0;width:1.6px;height:611.52px;background:#adadad;"></div>
<div class="a" style="left:656.7px;top:0;width:1.6px;height:611.52px;background:#adadad;"></div>
<div class="a" style="left:717.3px;top:0;width:1.6px;height:611.52px;background:#adadad;"></div>
<div class="a" style="left:778.0px;top:0;width:1.6px;height:611.52px;background:#adadad;"></div>
<div class="a" style="left:838.7px;top:0;width:1.6px;height:611.52px;background:#adadad;"></div>
<div class="a" style="left:899.3px;top:0;width:1.6px;height:611.52px;background:#adadad;"></div>
<div class="a" style="left:960.0px;top:0;width:1.6px;height:611.52px;background:#adadad;"></div>
<div class="a" style="left:1020.7px;top:0;width:1.6px;height:611.52px;background:#adadad;"></div>
<div class="a" style="left:50.75px;top:46.3px;width:970.7px;height:1.5px;background:#adadad;"></div>
<div class="a" style="left:50.75px;top:93.3px;width:970.7px;height:1.5px;background:#adadad;"></div>
<div class="a" style="left:50.75px;top:140.4px;width:970.7px;height:1.5px;background:#adadad;"></div>
<div class="a" style="left:50.75px;top:187.4px;width:970.7px;height:1.5px;background:#adadad;"></div>
<div class="a" style="left:50.75px;top:234.4px;width:970.7px;height:1.5px;background:#adadad;"></div>
<div class="a" style="left:50.75px;top:281.5px;width:970.7px;height:1.5px;background:#adadad;"></div>
<div class="a" style="left:50.75px;top:328.5px;width:970.7px;height:1.5px;background:#adadad;"></div>
<div class="a" style="left:50.75px;top:375.6px;width:970.7px;height:1.5px;background:#adadad;"></div>
<div class="a" style="left:50.75px;top:422.6px;width:970.7px;height:1.5px;background:#adadad;"></div>
<div class="a" style="left:50.75px;top:469.6px;width:970.7px;height:1.5px;background:#adadad;"></div>
<div class="a" style="left:50.75px;top:516.7px;width:970.7px;height:1.5px;background:#adadad;"></div>
<div class="a" style="left:50.75px;top:563.7px;width:970.7px;height:1.5px;background:#adadad;"></div>
<div class="a" style="left:945.3px;top:112.6px;width:31px;height:10px;background:#0a5cff;"></div>
<div class="a" style="left:399.3px;top:253.7px;width:31px;height:10px;background:#0a5cff;"></div>
<div class="a" style="left:460.0px;top:253.7px;width:31px;height:10px;background:#0a5cff;"></div>
<div class="a" style="left:702.3px;top:488.9px;width:31px;height:10px;background:#0a5cff;"></div>
</div>
<!--GRIDEND-->
<!--RIGHT-->
<div class="a lt" style="left:1393px;top:460.5px;width:15px;height:610.5px;border-radius:7.5px;"></div>
<div class="a" style="left:1393px;top:724px;width:15px;height:61px;border-radius:7.5px;background:#e8e8e8;"></div>
<div class="t" style="left:1467px;top:353.5px;font-size:21px;color:#f2f2f2;letter-spacing:1.9px;">Pitch</div>
<div class="a" style="left:1568px;top:325px;width:79.5px;height:80px;border-radius:15px;background:radial-gradient(circle at 50% 48%,#3d7bff 0%,#1b58ff 35%,#0a47f5 70%);box-shadow:1px 3px 6px rgba(0,0,0,0.45);"></div>
<svg class="a" style="left:1568px;top:325px" width="80" height="80">
<g stroke="#e2e8ff" stroke-width="2.2" fill="none" stroke-linecap="round">
<path d="M27.5,52 L37,43.6"/>
<path d="M46.6,27.2 L38.2,36.4 C36.5,38.5 36.8,41.5 39,43.4 C41.2,45.4 44.2,45 46,43 L53.4,32.6"/>
</g>
<circle cx="27.5" cy="52" r="2.6" fill="#e2e8ff"/>
</svg>
<div class="a" style="left:1470px;top:445px;width:148px;height:51px;background:linear-gradient(90deg,rgba(42,47,56,0) 0%,rgba(42,47,56,0.55) 25%,rgba(42,47,56,0.55) 75%,rgba(42,47,56,0) 100%);"></div>
<svg class="a" style="left:1470px;top:455px" width="148" height="30"><g fill="#5f6570"><path d="M3.5,15.2 L17.7,6.2 V24.2 Z"/><path d="M126.4,6.2 V24.2 L140.8,15.2 Z"/></g></svg>
<div class="t" style="left:1525.5px;top:460.6px;font-size:20px;color:#f2f2f2;letter-spacing:4.7px;">C3</div>
<div class="t" style="left:1450px;top:566.8px;font-size:18.5px;color:#42474f;letter-spacing:3.15px;">Duration</div>
<div class="a lt" style="left:1568px;top:535.6px;width:79.5px;height:79.4px;border-radius:15px;box-shadow:1px 3px 6px rgba(0,0,0,0.35);"></div>
<svg class="a" style="left:1568px;top:535.6px" width="80" height="80">
<g fill="#4a4f58"><circle cx="39" cy="40.3" r="11.6"/><rect x="36" y="25.8" width="6" height="3.2" rx="1"/><rect x="38" y="27" width="2" height="3"/>
<path d="M48.5,29.2 L51.2,31.8 L49.2,33.8 L46.4,31.2 Z"/></g>
<path d="M39,40.3 L44,34.5" stroke="#282f39" stroke-width="2" stroke-linecap="round"/>
</svg>
<div class="t" style="left:1589.5px;top:629px;font-size:22px;color:#f2f2f2;letter-spacing:-0.4px;transform:scaleX(1.15);transform-origin:0 0;">100</div>
<div class="a" style="left:1453px;top:661.7px;width:178px;height:14.3px;border-radius:7.2px;background:#0a4cff;"></div>
<div class="t" style="left:1451px;top:745.5px;font-size:18.5px;color:#42474f;letter-spacing:3.3px;">Velocity</div>
<div class="a lt" style="left:1568px;top:714px;width:79.5px;height:79.7px;border-radius:15px;box-shadow:1px 3px 6px rgba(0,0,0,0.35);"></div>
<svg class="a" style="left:1568px;top:714px" width="80" height="80"><g fill="none" stroke="#50565f" stroke-linecap="round">
<path d="M26.5,52.5 C30.5,53.5 33,50.5 34.5,45 L38.5,31 C40,26.5 43.5,25.5 50.5,27.5" stroke-width="3"/>
<path d="M31.5,36.5 H43.5" stroke-width="2.2"/></g></svg>
<div class="t" style="left:1592.8px;top:807.5px;font-size:22.5px;color:#f2f2f2;letter-spacing:1.4px;transform:scaleX(1.15);transform-origin:0 0;">80</div>
<div class="a lt" style="left:1453px;top:840.5px;width:178px;height:14.1px;border-radius:7px;"></div>
<div class="a" style="left:1453px;top:840.5px;width:142.7px;height:14.1px;border-radius:7px 0 0 7px;background:#0a4cff;"></div>
<div class="t" style="left:1450px;top:924.8px;font-size:18.5px;color:#42474f;letter-spacing:2.95px;">Density</div>
<div class="a lt" style="left:1568px;top:893.7px;width:79.5px;height:79px;border-radius:15px;box-shadow:1px 3px 6px rgba(0,0,0,0.35);"></div>
<svg class="a" style="left:1568px;top:893.7px" width="80" height="80">
<g fill="#50565f">
<circle cx="31" cy="30.5" r="3.5"/><circle cx="39.6" cy="35" r="4.2"/><circle cx="48" cy="29.5" r="3.8"/>
<circle cx="36" cy="27" r="1.6"/><circle cx="43" cy="26.8" r="1.2"/><circle cx="29" cy="38" r="1.8"/>
<circle cx="34.7" cy="43" r="4.2"/><circle cx="46.3" cy="38.2" r="2.4"/><circle cx="50.6" cy="35.2" r="1.4"/>
<circle cx="41.5" cy="40.8" r="1.8"/><circle cx="30.5" cy="49.3" r="3.6"/><circle cx="47.8" cy="46.3" r="4"/>
<circle cx="38" cy="50.7" r="1.6"/><circle cx="42.7" cy="47.6" r="2.2"/><circle cx="51.5" cy="41" r="1.3"/><circle cx="26.8" cy="43.5" r="1.2"/>
</g></svg>
<div class="a lt" style="left:1453.7px;top:1016px;width:126px;height:43.8px;border-radius:6px;"></div>
<div class="a" style="left:1582px;top:1016px;width:49px;height:43.8px;border-radius:6px;background:#252b34;"></div>
<svg class="a" style="left:1453.7px;top:1016px" width="178" height="44">
<g fill="#5f6570">
<ellipse cx="12" cy="20.5" rx="4.3" ry="6.8" transform="rotate(-10 12 20.5)"/><ellipse cx="14" cy="31.6" rx="2.6" ry="3.2" transform="rotate(-10 14 31.6)"/>
<ellipse cx="22.8" cy="18" rx="4.3" ry="6.8" transform="rotate(-10 22.8 18)"/><ellipse cx="20.5" cy="29.2" rx="2.6" ry="3.2" transform="rotate(-10 20.5 29.2)"/>
<path d="M102.8,20.7 L108.05,14.4 L113.3,20.7 Z M102.8,23.4 H113.3 L108.05,30 Z"/>
<path d="M139,22.7 L148.5,16 V20 C155,20 162,22 166.5,27 C160.5,24.8 154,24.3 148.5,25.2 V29.4 Z"/>
</g></svg>
<div class="t" style="left:1515.5px;top:1031px;font-size:16.5px;color:#f2f2f2;">2</div>

<!--BOTTOM-->
<div class="t" style="left:64px;top:1179.8px;font-size:17px;color:#f2f2f2;letter-spacing:1.95px;">Presets</div>
<svg class="a" style="left:148px;top:1172px" width="31" height="31"><g fill="#efefef">
<rect x="0" y="0" width="13.6" height="13.6" rx="2"/><rect x="17.2" y="0" width="13.6" height="13.6" rx="2"/>
<rect x="0" y="17.4" width="13.6" height="13.6" rx="2"/><rect x="17.2" y="17.4" width="13.6" height="13.6" rx="2"/></g></svg>
<div class="a dk" style="left:294px;top:1167px;width:44.7px;height:41px;border-radius:10px;"></div>
<div class="a dk" style="left:359.6px;top:1167px;width:43.6px;height:41px;border-radius:10px;"></div>
<svg class="a" style="left:294px;top:1167px" width="110" height="41"><g fill="none" stroke="#f2f2f2" stroke-width="2.6" stroke-linecap="round" stroke-linejoin="round">
<path d="M26.5,12 L18.6,20.5 L26.5,29"/><path d="M83,12 L90.9,20.5 L83,29"/></g></svg>
<div class="a dk" style="left:477px;top:1158px;width:758px;height:60px;border-radius:30px;"></div>
<div class="a" style="left:794.3px;top:1163.5px;width:123px;height:48.5px;border-radius:24.3px;background:#0a4cff;box-shadow:1px 3px 6px rgba(0,0,0,0.4);"></div>
<div class="t" style="left:495px;top:1180px;width:100px;text-align:center;font-size:18.5px;color:#4b5059;letter-spacing:4px;text-indent:4px;">-24</div>
<div class="t" style="left:650px;top:1180px;width:100px;text-align:center;font-size:18.5px;color:#4b5059;letter-spacing:2.6px;text-indent:2.6px;">-12</div>
<div class="t" style="left:804.7px;top:1180px;width:100px;text-align:center;font-size:18.5px;color:#f2f2f2;">0</div>
<div class="t" style="left:960px;top:1180px;width:100px;text-align:center;font-size:18.5px;color:#4b5059;letter-spacing:2.6px;text-indent:2.6px;">+12</div>
<div class="t" style="left:1114px;top:1180px;width:100px;text-align:center;font-size:18.5px;color:#4b5059;letter-spacing:3.5px;text-indent:3.5px;">+24</div>
<div class="a dk" style="left:1308.5px;top:1166.7px;width:43.5px;height:42px;border-radius:10px;"></div>
<div class="a dk" style="left:1374px;top:1166.7px;width:43.6px;height:42px;border-radius:10px;"></div>
<svg class="a" style="left:1308.5px;top:1166.7px" width="110" height="42"><g fill="none" stroke="#f2f2f2" stroke-width="3" stroke-linecap="round" stroke-linejoin="round">
<path d="M12.6,17.6 L21.75,26.2 L30.9,17.6"/><path d="M77.6,25.6 L86.8,17 L96,25.6"/></g></svg>
<svg class="a" style="left:1503px;top:1131px" width="60" height="60">
<circle cx="30.4" cy="30" r="19.7" fill="#efefef"/>
<g fill="#1e232b"><circle cx="30" cy="19.8" r="2.2"/><circle cx="22.7" cy="22.5" r="2.2"/><circle cx="37" cy="22.5" r="2.2"/>
<circle cx="19.2" cy="29.7" r="2.2"/><circle cx="40" cy="29.7" r="2.2"/>
<path d="M25.8,49.8 A4.6,4.6 0 0 1 35,49.8 Z"/></g>
</svg>
<svg class="a" style="left:1640px;top:1228px" width="28" height="26"><g fill="none" stroke="#c8c8c8" stroke-width="1.2">
<path d="M12,26 L27,11"/><path d="M17,26 L27,16"/><path d="M22,26 C22,23 24,21 27,21"/></g></svg>

</body></html>
